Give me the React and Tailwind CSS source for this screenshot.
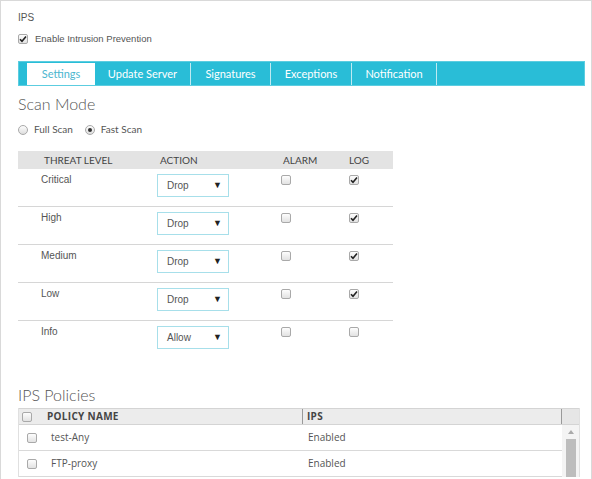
import React from 'react';

const arial = { fontFamily: '"Liberation Sans", Arial, sans-serif' };
const lato = { fontFamily: 'Lato, "Open Sans", sans-serif' };
const openSans = { fontFamily: '"Open Sans", sans-serif' };

const Check = ({ checked, className = '' }) => (
    <span className={`flex shrink-0 w-[10px] h-[10px] items-center justify-center rounded-[2px] border border-[#a9a9a9] bg-gradient-to-b from-[#fdfdfd] to-[#e2e2e2] ${className}`}>
        {checked && (
            <svg width="8" height="8" viewBox="0 0 8 8">
                <path d="M1 4.2 L3 6.3 L7 1.5" fill="none" stroke="#222" strokeWidth="1.6" />
            </svg>
        )}
    </span>
);

const Radio = ({ checked }) => (
    <span className="inline-flex w-[10px] h-[10px] items-center justify-center rounded-full border border-[#a9a9a9] bg-gradient-to-b from-[#fdfdfd] to-[#dedede]">
        {checked && <span className="w-[4px] h-[4px] rounded-full bg-[#333]" />}
    </span>
);

const tabs = [
    { name: 'Settings', w: 'w-[68px]' },
    { name: 'Update Server', w: 'w-[96px]' },
    { name: 'Signatures', w: 'w-[80px]' },
    { name: 'Exceptions', w: 'w-[81px]' },
    { name: 'Notification', w: 'w-[85px]' },
];

const levels = [
    { name: 'Critical', action: 'Drop', alarm: false, log: true },
    { name: 'High', action: 'Drop', alarm: false, log: true },
    { name: 'Medium', action: 'Drop', alarm: false, log: true },
    { name: 'Low', action: 'Drop', alarm: false, log: true },
    { name: 'Info', action: 'Allow', alarm: false, log: false },
];

const policies = ['test-Any', 'FTP-proxy'];

export default function App() {
    return (
        <div className="w-[592px] h-[479px] overflow-hidden bg-white border-x border-t border-[#d9d9d9] pl-[17px] pr-[5px] text-[#444]">
            {/* Header */}
            <div className="pt-[9px] text-[10px] text-[#555]" style={arial}>IPS</div>
            <label className="flex items-center gap-[7px] mt-[7px] text-[9.5px] text-[#555]" style={arial}>
                <Check checked />
                <span>Enable Intrusion Prevention</span>
            </label>

            {/* Tabs */}
            <div className="flex mt-[15px] h-[25px] w-[567px] bg-[#29bdd7] border border-[#5ccde0] pl-[8px] pt-[1px]" style={lato}>
                {tabs.map((t, i) => (
                    <div
                        key={t.name}
                        className={`${t.w} flex items-center justify-center text-[11px] ${i === 0 ? 'bg-white text-[#4cb6cf]' : 'text-white border-r border-[#bfeaf2]'}`}
                    >
                        {t.name}
                    </div>
                ))}
            </div>

            {/* Scan mode */}
            <div className="mt-[8px] text-[16px] text-[#555] font-light leading-[20px]" style={lato}>Scan Mode</div>
            <div className="flex items-center mt-[8px] text-[10px] text-[#555]" style={lato}>
                <Radio />
                <span className="ml-[6px] mr-[12px]">Full Scan</span>
                <Radio checked />
                <span className="ml-[6px]">Fast Scan</span>
            </div>

            {/* Threat table */}
            <div className="mt-[14px] w-[375px]">
                <div className="grid grid-cols-[142px_123px_66px_44px] h-[18px] items-center bg-[#e3e3e3] text-[10px] text-[#444]" style={lato}>
                    <span className="pl-[26px]">THREAT LEVEL</span>
                    <span>ACTION</span>
                    <span>ALARM</span>
                    <span>LOG</span>
                </div>
                {levels.map((l, i) => (
                    <div
                        key={l.name}
                        className={`grid grid-cols-[139px_124px_68px_44px] h-[38px] ${i < levels.length - 1 ? 'border-b border-[#d6d6d6]' : ''}`}
                    >
                        <span className="pl-[23px] pt-[5px] text-[10px] leading-[12px] text-[#555]" style={arial}>{l.name}</span>
                        <div className="pt-[5px]">
                            <div className="flex items-center justify-between w-[72px] h-[23px] border border-[#a7dfea] pl-[9px] pr-[6px] text-[10px] text-[#555]" style={arial}>
                                <span>{l.action}</span>
                                <span className="text-[9px] text-[#222]">▼</span>
                            </div>
                        </div>
                        <div className="pt-[6px]"><Check checked={l.alarm} /></div>
                        <div className="pt-[6px]"><Check checked={l.log} /></div>
                    </div>
                ))}
            </div>

            {/* IPS Policies */}
            <div className="mt-[26px] text-[16px] text-[#555] font-light leading-[20px]" style={lato}>IPS Policies</div>
            <div className="mt-[3px] w-[562px] border-x border-[#e0e0e0]">
                <div className="flex h-[17px] bg-[#ececec] border-y border-[#d4d4d4] text-[10px] font-bold text-[#444] tracking-[0.3px]" style={openSans}>
                    <div className="w-[284px] flex items-center pl-[3px] border-r border-[#999]">
                        <Check />
                        <span className="ml-[15px]">POLICY NAME</span>
                    </div>
                    <div className="w-[259px] flex items-center pl-[4px] border-r border-[#999]">IPS</div>
                    <div className="flex-1 bg-[#e6e6e6]" />
                </div>
                <div className="flex">
                    <div className="flex-1">
                        {policies.map((p) => (
                            <div key={p} className="flex items-center h-[26px] border-b border-[#d9d9d9] text-[10px] text-[#555]" style={openSans}>
                                <div className="w-[284px] flex items-center pl-[8px]">
                                    <Check />
                                    <span className="ml-[14px]">{p}</span>
                                </div>
                                <span className="pl-[5px]">Enabled</span>
                            </div>
                        ))}
                    </div>
                    <div className="w-[17px] flex flex-col items-center bg-[#f4f4f4]">
                        <svg width="8" height="8" viewBox="0 0 8 8" className="mt-[3px]">
                            <path d="M1 6 L4 2 L7 6 Z" fill="#aaa" />
                        </svg>
                        <div className="mt-[3px] w-[10px] flex-1 bg-[#bdbdbd]" />
                    </div>
                </div>
            </div>
        </div>
    );
}
